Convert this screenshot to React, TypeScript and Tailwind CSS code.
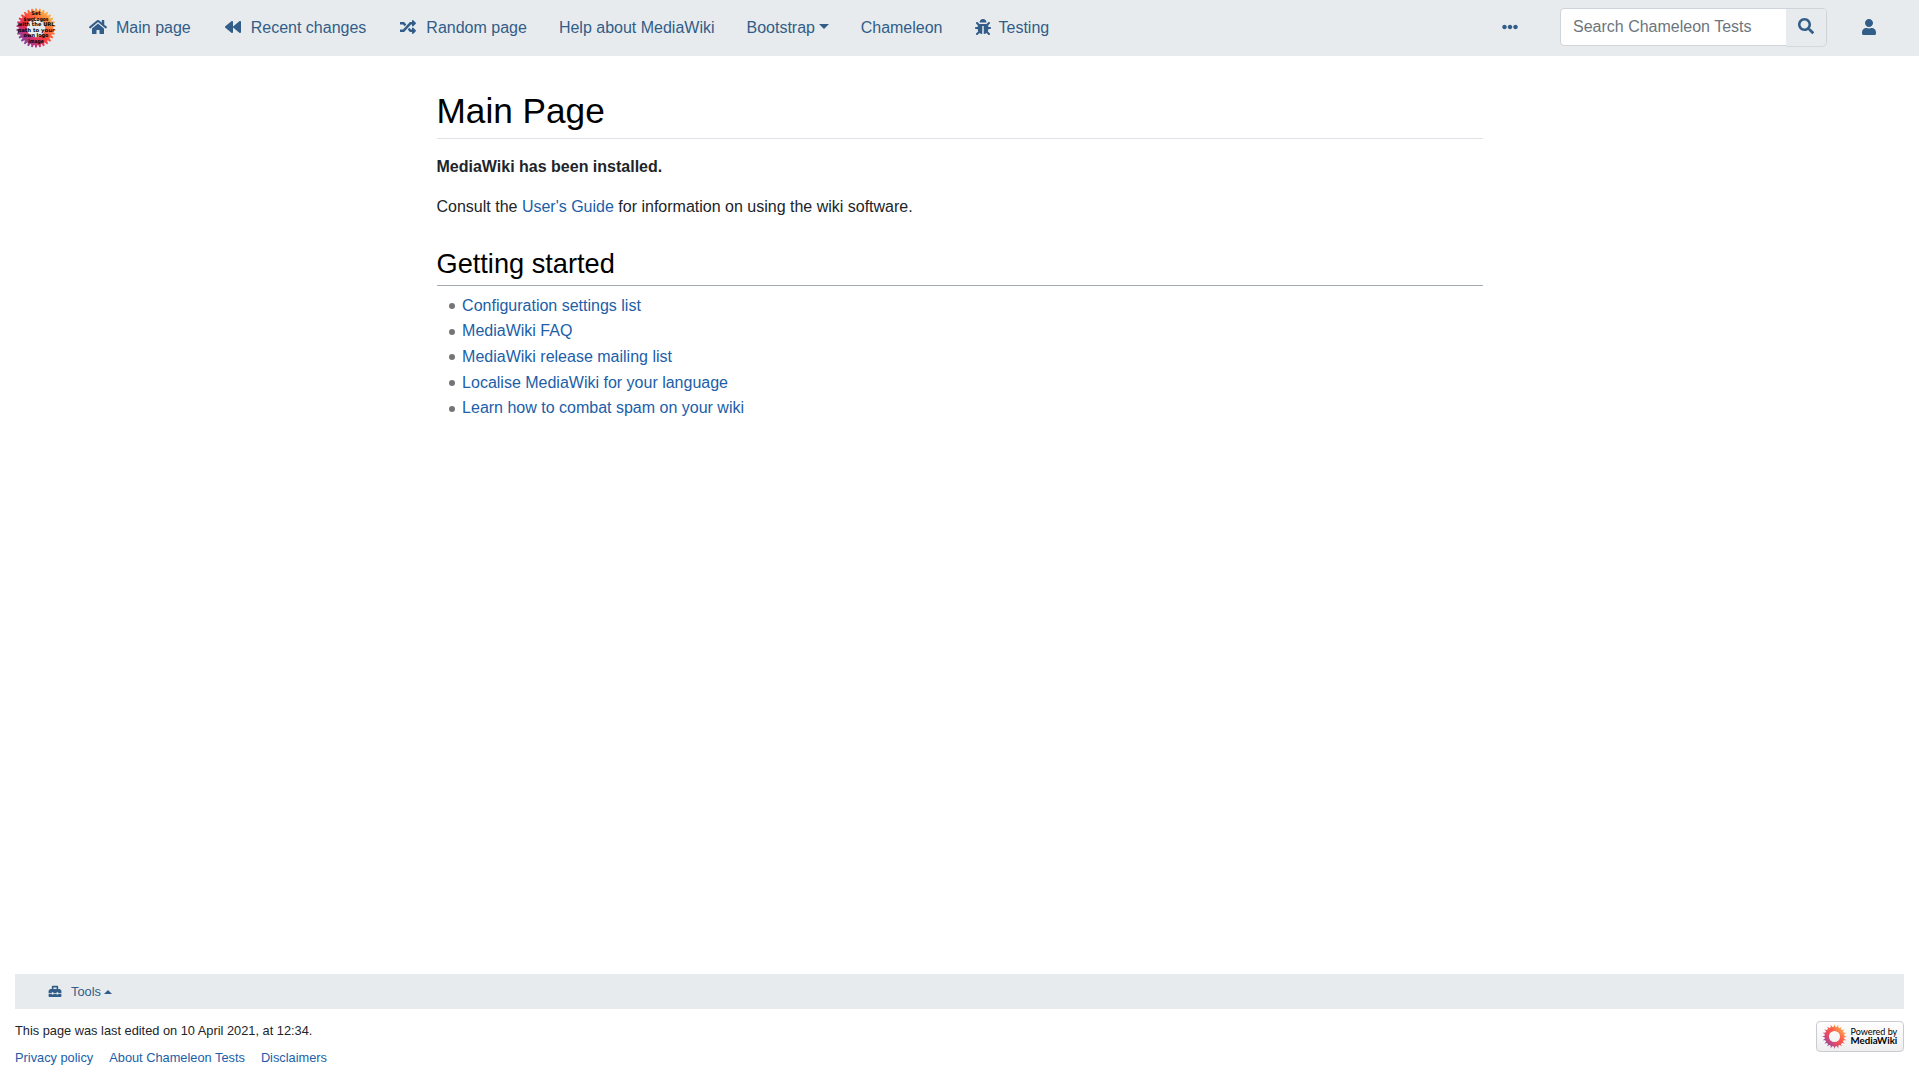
import React from "react";
import {
  FaHome,
  FaBackward,
  FaRandom,
  FaBug,
  FaEllipsisH,
  FaSearch,
  FaUser,
  FaToolbox,
} from "react-icons/fa";

const PETALS = Array.from({ length: 20 }, (_, i) => i * 18);
const TEETH = Array.from({ length: 30 }, (_, i) => i * 12);

function LogoText({ y, children }: { y: number; children: string }) {
  return (
    <text x="20" y={y} textAnchor="middle" fontSize="5.2" fontWeight="700" fill="#000" fontFamily="'DejaVu Sans', sans-serif" textLength={children.length * 3.1} lengthAdjust="spacingAndGlyphs">
      {children}
    </text>
  );
}

function SiteLogo() {
  return (
    <svg className="h-10 w-10 overflow-visible" viewBox="0 0 40 40">
      <defs>
        <linearGradient id="sun" gradientUnits="userSpaceOnUse" x1="6" y1="32" x2="33" y2="7">
          <stop offset="0" stopColor="#87429a" />
          <stop offset="0.25" stopColor="#d72e65" />
          <stop offset="0.5" stopColor="#ff4439" />
          <stop offset="1" stopColor="#ffae45" />
        </linearGradient>
        <mask id="ring">
          {TEETH.map((a) => (
            <path key={a} d="M18.5 4 L19.2 .4 L20.8 .4 L21.5 4Z" fill="#fff" transform={`rotate(${a} 20 20)`} />
          ))}
          <circle cx="20" cy="20" r="17" fill="#fff" />
          <circle cx="20" cy="20" r="9.2" fill="#000" />
        </mask>
      </defs>
      <rect width="40" height="40" fill="url(#sun)" mask="url(#ring)" />
      <LogoText y={7.4}>Set</LogoText>
      <LogoText y={12.8}>$wgLogos</LogoText>
      <LogoText y={18.4}>with the URL</LogoText>
      <LogoText y={23.9}>path to your</LogoText>
      <LogoText y={29.2}>own logo</LogoText>
      <LogoText y={34.8}>image</LogoText>
    </svg>
  );
}

function Sunflower() {
  return (
    <svg className="-mt-px h-[25px] w-[25px]" viewBox="0 0 24 24">
      <defs>
        <linearGradient id="flower" gradientUnits="userSpaceOnUse" x1="4" y1="20" x2="20" y2="4">
          <stop offset="0" stopColor="#8d4a9c" />
          <stop offset="0.3" stopColor="#e0486b" />
          <stop offset="0.6" stopColor="#fb584a" />
          <stop offset="1" stopColor="#fdb050" />
        </linearGradient>
        <mask id="petals">
          {PETALS.map((a) => (
            <path key={a} d="M10.6 5 L12 0 L13.4 5Z" fill="#fff" transform={`rotate(${a} 12 12)`} />
          ))}
          <circle cx="12" cy="12" r="9.6" fill="#fff" />
          <circle cx="12" cy="12" r="5.3" fill="#000" />
        </mask>
      </defs>
      <rect width="24" height="24" fill="url(#flower)" mask="url(#petals)" />
    </svg>
  );
}

function NavItem({ icon, caret, children }: { icon?: React.ReactNode; caret?: boolean; children: string }) {
  return (
    <a className="flex items-center px-4 leading-6">
      {icon}
      {children}
      {caret && (
        <span className="mb-[3px] ml-[3.7px] border-x-5 border-t-5 border-x-transparent border-t-[#325d88]" />
      )}
    </a>
  );
}

const ICON = "mb-0.5 mr-2 h-4 w-5";

const LINKS = [
  "Configuration settings list",
  "MediaWiki FAQ",
  "MediaWiki release mailing list",
  "Localise MediaWiki for your language",
  "Learn how to combat spam on your wiki",
];

export default function App() {
  return (
    <div className="flex h-[1079px] flex-col overflow-hidden bg-white text-base text-[#212529] [font-family:'Liberation_Sans',Arial,sans-serif]">
      <nav className="flex h-14 shrink-0 items-center bg-[#e7ebee] pl-4 text-[#325d88]">
        <SiteLogo />
        <div className="ml-4 flex">
          <NavItem icon={<FaHome className={ICON} />}>Main page</NavItem>
          <NavItem icon={<FaBackward className={ICON} />}>Recent changes</NavItem>
          <NavItem icon={<FaRandom className={ICON} />}>Random page</NavItem>
          <NavItem>Help about MediaWiki</NavItem>
          <NavItem caret>Bootstrap</NavItem>
          <NavItem>Chameleon</NavItem>
          <NavItem icon={<FaBug className="mr-2 mb-0.5 h-4 w-4" />}>Testing</NavItem>
        </div>
        <div className="ml-auto flex items-center">
          <FaEllipsisH className="mb-0.5 h-4 w-4" />
          <div className="-mt-[2px] ml-[42px] flex h-[38px] w-[267px] rounded border border-[#ced4da] bg-white">
            <div className="flex grow items-center pl-3 leading-6 text-[#6c757d]">Search Chameleon Tests</div>
            <button className="flex h-[37px] w-10 items-center justify-center rounded-r bg-[#e7ebee] pb-[3px] shadow-[0_1px_1px_rgba(0,0,0,0.08)]">
              <FaSearch className="h-4 w-4" />
            </button>
          </div>
          <FaUser className="mr-[43px] mb-0.5 ml-[35px] h-4 w-3.5" />
        </div>
      </nav>

      <main className="ml-[436.5px] w-[1046.5px] pt-[34px]">
        <h1 className="h-[49px] border-b border-[#dee2e6] text-[35.2px] leading-[42px] text-black">Main Page</h1>
        <p className="mt-4 leading-6 font-bold">MediaWiki has been installed.</p>
        <p className="mt-4 leading-6">
          Consult the <a className="text-[#205ea8]">User's Guide</a> for information on using the wiki software.
        </p>
        <h2 className="mt-7 h-[38.9px] border-b border-[#a2a9b1] text-[27.2px] leading-[33px] text-black">Getting started</h2>
        <ul className="mt-[6.95px]">
          {LINKS.map((link) => (
            <li key={link} className="flex items-center pl-3 leading-[25.6px]">
              <span className="mt-px mr-[7.6px] size-1.5 rounded-full bg-[#757575]" />
              <a className="text-[#205ea8]">{link}</a>
            </li>
          ))}
        </ul>
      </main>

      <footer className="mt-auto h-[105px] shrink-0 px-[15px] text-[12.8px]">
        <div className="flex h-[35px] items-center bg-[#e7ebee] pl-8 text-[#325d88]">
          <FaToolbox className="mr-[8px] mb-px h-[12.8px] w-4" />
          Tools
          <span className="ml-[3.3px] border-x-4 border-b-4 border-x-transparent border-b-[#325d88]" />
        </div>
        <div className="flex justify-between">
          <div>
            <p className="mt-3 leading-[19px]">This page was last edited on 10 April 2021, at 12:34.</p>
            <div className="mt-2 flex gap-4 leading-[19px] text-[#205ea8]">
              <a>Privacy policy</a>
              <a>About Chameleon Tests</a>
              <a>Disclaimers</a>
            </div>
          </div>
          <div className="mt-3 flex h-[31px] w-[88px] items-center rounded-[4px] border border-[#c8ccd1] bg-linear-to-b from-white to-[#eeeeee] pl-[5px] text-black [font-family:Lato,sans-serif]">
            <Sunflower />
            <div className="mb-px ml-[3.5px] text-[9px] leading-[9.5px] whitespace-nowrap">
              <div>Powered by</div>
              <div className="text-[9.7px] font-bold">MediaWiki</div>
            </div>
          </div>
        </div>
      </footer>
    </div>
  );
}
